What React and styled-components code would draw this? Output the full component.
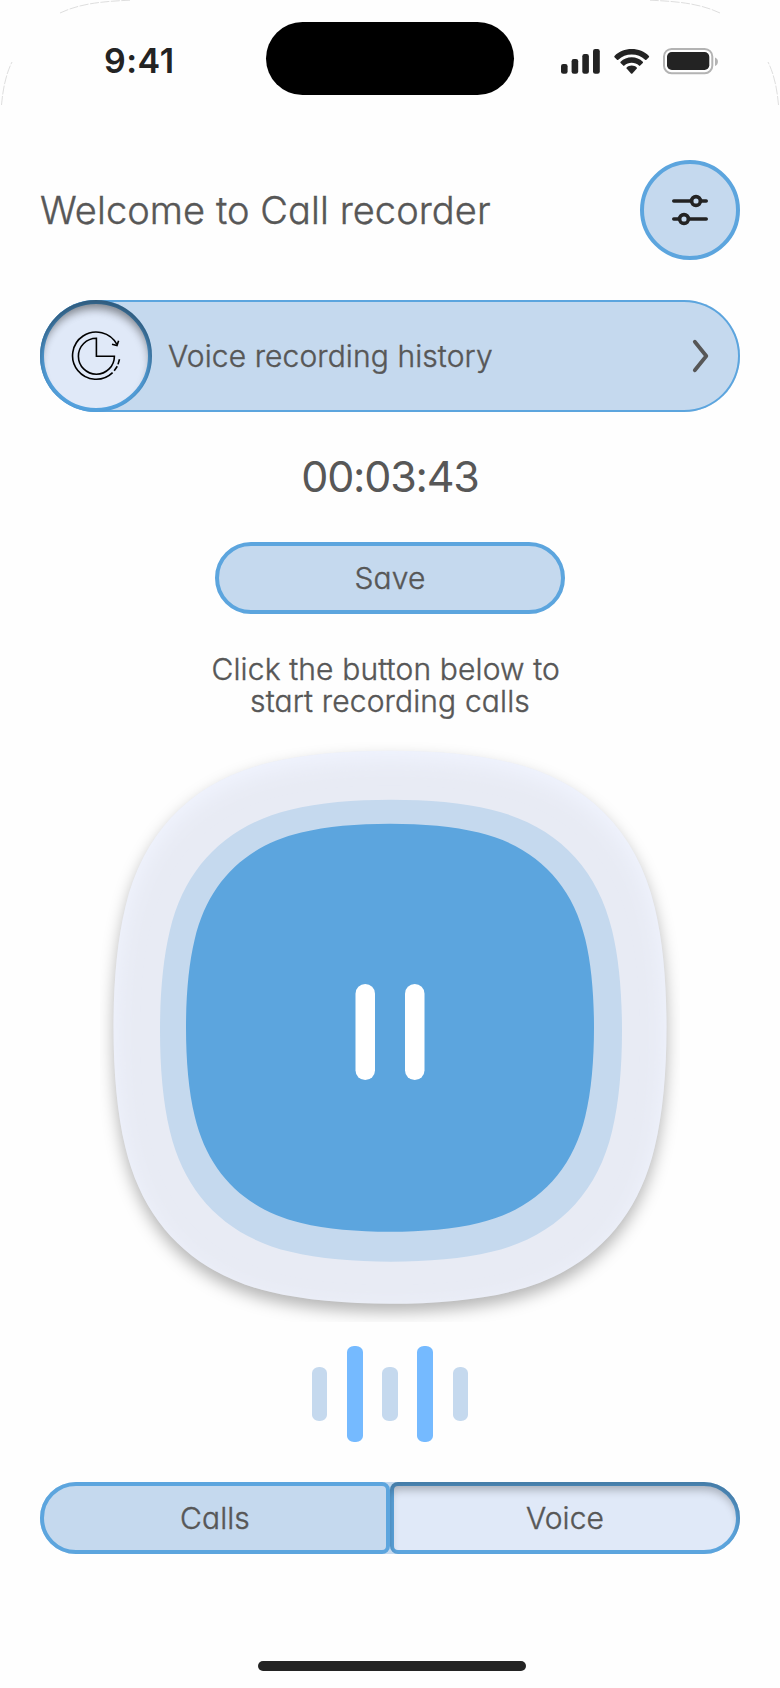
import React from "react";
import styled, { createGlobalStyle, css } from "styled-components";

const color = {
  page: "#fefefe",
  text: "#575757",
  ink: "#232323",
  blue: "#5ca5de",
  soft: "#c5d9ee",
  pale: "#e0e9f8",
  wave: "#75baff",
};

const GlobalStyle = createGlobalStyle`
  *, *::before, *::after { box-sizing: border-box; }
  body { margin: 0; background: ${color.page}; }
  button { font: inherit; color: inherit; padding: 0; margin: 0; cursor: pointer; }
`;

/* A weight between Inter Light and Inter Regular. */
const softWeight = css`
  font-weight: 300;
  -webkit-text-stroke: 0.4px currentColor;
`;

const Screen = styled.main`
  position: relative;
  display: flex;
  flex-direction: column;
  align-items: center;
  width: 780px;
  height: 1688px;
  overflow: hidden;
  background: ${color.page};
  color: ${color.text};
  font-family: Inter, "Liberation Sans", sans-serif;
  font-feature-settings: "cv11", "calt" 0;
`;

const ScreenCorners = styled.svg`
  position: absolute;
  top: 0;
  left: 0;
  pointer-events: none;
`;

const StatusBar = styled.div`
  display: flex;
  justify-content: space-between;
  width: 100%;
  height: 160px;
  padding: 22px 61px 0 104px;
`;

const Clock = styled.time`
  width: 162px;
  padding-top: 18px;
  color: ${color.ink};
  font-size: 34px;
  font-weight: 600;
  line-height: 41px;
  letter-spacing: 0.5px;
`;

const Island = styled.div`
  width: 248px;
  height: 73px;
  border-radius: 37px;
  background: #000;
`;

const StatusIcons = styled.svg`
  display: block;
  margin: 25px 0 0 46px;
`;

const Header = styled.header`
  display: flex;
  align-items: center;
  justify-content: space-between;
  width: 700px;
  height: 100px;
`;

const Title = styled.h1`
  margin: 0;
  padding-bottom: 1px;
  font-size: 38px;
  line-height: 46px;
  letter-spacing: 0.07px;
  white-space: nowrap;
  ${softWeight}
`;

const RoundButton = styled.button`
  display: grid;
  place-items: center;
  width: 100px;
  height: 100px;
  border: 4px solid ${color.blue};
  border-radius: 50%;
  background: ${color.soft};
`;

const HistoryRow = styled.button`
  display: flex;
  align-items: center;
  width: 700px;
  height: 112px;
  margin-top: 40px;
  padding-right: 30px;
  border: 0;
  border-radius: 56px;
  background: ${color.soft};
  box-shadow: inset 0 0 0 2px ${color.blue};
`;

const HistoryBadge = styled.span`
  position: relative;
  display: grid;
  place-items: center;
  width: 112px;
  height: 112px;
  margin-right: 16px;
  border: 4px solid #54a1dd;
  border-radius: 50%;
  background: ${color.pale};
  &::after {
    content: "";
    position: absolute;
    inset: -4px;
    border-radius: 50%;
    box-shadow: inset 0 8px 8px rgba(0, 0, 0, 0.25), inset -2px 8px 10px rgba(0, 0, 0, 0.25);
  }
`;

const Label = styled.span`
  display: inline-block;
  padding-bottom: 1px;
  font-size: 30px;
  line-height: 32px;
  letter-spacing: 0.1px;
  white-space: nowrap;
  ${softWeight}
`;

const Chevron = styled.svg`
  display: block;
  margin-left: auto;
`;

const Timer = styled.div`
  margin-top: 38px;
  font-size: 43px;
  font-weight: 400;
  line-height: 52px;
  letter-spacing: -1.2px;
`;

const SaveButton = styled.button`
  width: 350px;
  height: 72px;
  margin-top: 40px;
  border: 4px solid ${color.blue};
  border-radius: 36px;
  background: ${color.soft};
`;

const Hint = styled.p`
  margin: 39px 0 0;
  font-size: 30px;
  line-height: 32px;
  letter-spacing: 0.14px;
  text-align: center;
  ${softWeight}
`;

const RecordButton = styled.button`
  display: block;
  width: 580px;
  height: 584px;
  margin-top: 21px;
  border: 0;
  background: none;
  svg { display: block; }
`;

const Waveform = styled.div`
  display: flex;
  align-items: center;
  gap: 19.6px;
  height: 96px;
  margin-top: 24px;
`;

const WaveBar = styled.span`
  width: 15.6px;
  height: ${(p) => (p.$tall ? 96 : 54)}px;
  border-radius: 7px / 6px;
  background: ${(p) => (p.$tall ? color.wave : color.soft)};
`;

const Tabs = styled.nav`
  display: flex;
  width: 700px;
  height: 72px;
  margin-top: 40px;
  border-radius: 36px;
  background: ${color.soft};
`;

const activeTab = css`
  background: ${color.pale};
  &::after {
    content: "";
    position: absolute;
    inset: -4px;
    border-radius: inherit;
    box-shadow: inset 0 8px 8px rgba(0, 0, 0, 0.25);
  }
`;

const Tab = styled.button`
  position: relative;
  flex: 1;
  border: 4px solid ${color.blue};
  border-radius: ${(p) => (p.$side === "left" ? "36px 8px 8px 36px" : "8px 36px 36px 8px")};
  background: ${color.soft};
  ${(p) => p.$active && activeTab}
`;

const HomeIndicator = styled.div`
  width: 268px;
  height: 10px;
  margin-top: 107px;
  margin-left: 3px;
  border-radius: 5px;
  background: ${color.ink};
`;

const quarter = [
  [-1, -0.16, -0.987, -0.312, -0.957, -0.435],
  [-0.892, -0.71, -0.71, -0.892, -0.435, -0.957],
  [-0.312, -0.987, -0.16, -1, 0, -1],
];

/* Rounded square made of one quarter outline turned four times. */
function squircle(cx, cy, r) {
  let d = `M${cx - r} ${cy}`;
  for (let turn = 0; turn < 4; turn += 1) {
    quarter.forEach((seg) => {
      d += "C";
      for (let i = 0; i < 6; i += 2) {
        let x = seg[i];
        let y = seg[i + 1];
        for (let k = 0; k < turn; k += 1) [x, y] = [-y, x];
        d += `${(cx + x * r).toFixed(2)} ${(cy + y * r).toFixed(2)} `;
      }
    });
  }
  return `${d}Z`;
}

function RecordArt() {
  return (
    <svg width="580" height="584" viewBox="100 738 580 584">
      <defs>
        <filter id="drop" filterUnits="userSpaceOnUse" x="100" y="738" width="580" height="584">
          <feGaussianBlur stdDeviation="8" />
        </filter>
        <filter id="glow" filterUnits="userSpaceOnUse" x="60" y="700" width="660" height="660">
          <feGaussianBlur stdDeviation="11" />
        </filter>
        <clipPath id="plate">
          <path d={squircle(390, 1027.2, 276.5)} />
        </clipPath>
      </defs>
      <path d={squircle(390, 1035.2, 276.5)} fill="#000" fillOpacity="0.29" filter="url(#drop)" />
      <path d={squircle(390, 1027.2, 276.5)} fill="#e8ebf4" />
      <g clipPath="url(#plate)">
        <path
          d={`M60 700H720V1360H60Z${squircle(390, 1035.2, 276.5)}`}
          fill="#f1f4ff"
          fillRule="evenodd"
          filter="url(#glow)"
        />
      </g>
      <path d={squircle(391, 1030.8, 231)} fill={color.soft} />
      <path d={squircle(390, 1027.8, 204)} fill={color.blue} />
      <rect x="355.5" y="984" width="19.5" height="96" rx="9.75" fill="#fff" />
      <rect x="405" y="984" width="19.5" height="96" rx="9.75" fill="#fff" />
    </svg>
  );
}

function StatusArt() {
  return (
    <StatusIcons width="159" height="28" viewBox="560 47 159 28">
      <g fill={color.ink}>
        <rect x="561" y="64" width="6.6" height="9.7" rx="2.2" />
        <rect x="571.6" y="59" width="6.6" height="14.7" rx="2.2" />
        <rect x="582.3" y="54" width="6.6" height="19.7" rx="2.2" />
        <rect x="593" y="49" width="6.8" height="24.7" rx="2.2" />
        <path d="M631.7 49C638.4 49 644.5 51.5 648.9 55.9C649.3 56.3 649.3 56.8 648.9 57.2L646.4 59.7C646 60.1 645.5 60.1 645.1 59.7C641.5 56.3 636.8 54.4 631.7 54.4C626.6 54.4 621.9 56.3 618.3 59.7C617.9 60.1 617.4 60.1 617 59.7L614.5 57.2C614.1 56.8 614.1 56.3 614.5 55.9C618.9 51.5 625 49 631.7 49Z" />
        <path d="M631.7 57.3C636 57.3 639.8 58.9 642.8 61.7C643.2 62.1 643.2 62.6 642.8 63L640.2 65.6C639.8 66 639.4 66 639 65.6C637 63.8 634.5 62.8 631.7 62.8C628.9 62.8 626.4 63.8 624.4 65.6C624 66 623.6 66 623.2 65.6L620.6 63C620.2 62.6 620.2 62.1 620.6 61.7C623.6 58.9 627.4 57.3 631.7 57.3Z" />
        <path d="M631.7 65.6C633.7 65.6 635.4 66.3 636.7 67.4C637.1 67.8 637.1 68.2 636.8 68.6L632.4 73.4C632 73.8 631.4 73.8 631 73.4L626.6 68.6C626.3 68.2 626.3 67.8 626.7 67.4C628 66.3 629.7 65.6 631.7 65.6Z" />
        <rect x="667" y="52" width="42.3" height="18" rx="4.8" />
      </g>
      <rect x="664" y="48.9" width="48.3" height="24.4" rx="7.6" fill="none" stroke="#b3b3b3" strokeWidth="2" />
      <path d="M715 57.5C717.1 58.3 717.9 59.8 717.9 61.7C717.9 63.6 717.1 65.2 715 66Z" fill="#b3b3b3" />
    </StatusIcons>
  );
}

export default function App() {
  return (
    <>
      <GlobalStyle />
      <Screen>
        <ScreenCorners width="780" height="110" viewBox="0 0 780 110" fill="none" stroke="#d6d6d6" strokeWidth="0.8" strokeDasharray="9 1.5">
          <path d="M1.5 105C3 88 6 74 12 62M60 13C78 4.5 98 1.5 130 0.2" />
          <path d="M778.5 105C777 88 774 74 768 62M720 13C702 4.5 682 1.5 650 0.2" />
        </ScreenCorners>

        <StatusBar>
          <Clock>9:41</Clock>
          <Island />
          <StatusArt />
        </StatusBar>

        <Header>
          <Title>Welcome to Call recorder</Title>
          <RoundButton aria-label="Settings">
            <svg width="40" height="36" viewBox="670 192 40 36" fill="none" stroke={color.ink} strokeWidth="3.6" strokeLinecap="round">
              <path d="M673.8 201H691.5M700.5 201H706.2M673.8 219H679.5M688.5 219H706.2" />
              <circle cx="696" cy="201" r="4.4" />
              <circle cx="684" cy="219" r="4.4" />
            </svg>
          </RoundButton>
        </Header>

        <HistoryRow>
          <HistoryBadge>
            <svg width="50" height="50" viewBox="71 331 50 50" fill="none" stroke="#000" strokeWidth="1.6">
              <path d="M112.6 372.6A23.6 23.6 0 1 1 116.9 344.4" />
              <path d="M112 344.2L117 345.5L118.6 340.8" />
              <path d="M114.2 370.8L117.3 366.2M118 364.4L119.5 359.2" />
              <path d="M96.4 338.2A18 18 0 1 0 114.4 356.2H96.4Z" />
            </svg>
          </HistoryBadge>
          <Label>Voice recording history</Label>
          <Chevron width="18" height="34" viewBox="691 339 18 34" fill="none" stroke={color.text} strokeWidth="3.8" strokeLinecap="round" strokeLinejoin="round">
            <path d="M693.8 341.8L705.3 356L693.8 370.2" />
          </Chevron>
        </HistoryRow>

        <Timer>00:03:43</Timer>
        <SaveButton>
          <Label>Save</Label>
        </SaveButton>
        <Hint>
          Click the button below to&nbsp;
          <br />
          start recording calls
        </Hint>

        <RecordButton aria-label="Pause">
          <RecordArt />
        </RecordButton>

        <Waveform>
          {[false, true, false, true, false].map((tall, i) => (
            <WaveBar key={i} $tall={tall} />
          ))}
        </Waveform>

        <Tabs>
          <Tab $side="left">
            <Label>Calls</Label>
          </Tab>
          <Tab $side="right" $active>
            <Label>Voice</Label>
          </Tab>
        </Tabs>
        <HomeIndicator />
      </Screen>
    </>
  );
}
